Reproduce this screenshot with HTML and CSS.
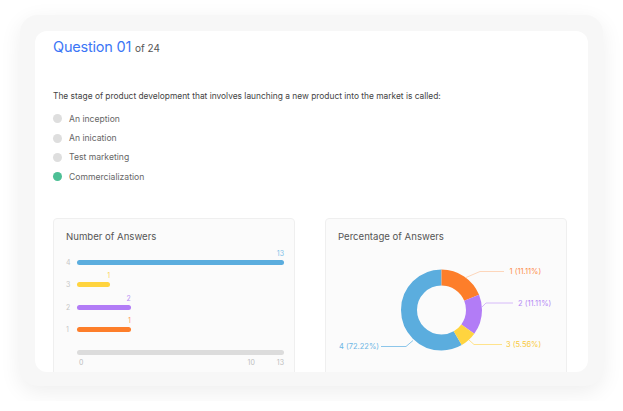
FILE: index.html
```html
<!DOCTYPE html>
<html lang="en">
<head>
  <meta charset="UTF-8" />
  <title>Question 01 of 24</title>
  <link rel="stylesheet" href="styles.css">
</head>
<body>
  <div class="frame">
    <div class="sheet">
      <h1 class="q-title">Question 01 <span class="q-count">of 24</span></h1>

      <p class="q-text">The stage of product development that involves launching a new product into the market is called:</p>

      <ul class="options">
        <li><span class="radio"></span>An inception</li>
        <li><span class="radio"></span>An inication</li>
        <li><span class="radio"></span>Test marketing</li>
        <li><span class="radio checked"></span>Commercialization</li>
      </ul>

      <div class="charts">
        <div class="chart-card">
          <div class="card-title">Number of Answers</div>
          <div class="bars">
            <div class="bar-row">
              <span class="bar-label">4</span>
              <div class="track">
                <div class="bar-wrap" style="width: 100%">
                  <span class="val blue">13</span>
                  <span class="bar bg-blue"></span>
                </div>
              </div>
            </div>
            <div class="bar-row">
              <span class="bar-label">3</span>
              <div class="track">
                <div class="bar-wrap" style="width: 16%">
                  <span class="val yellow">1</span>
                  <span class="bar bg-yellow"></span>
                </div>
              </div>
            </div>
            <div class="bar-row">
              <span class="bar-label">2</span>
              <div class="track">
                <div class="bar-wrap" style="width: 26%">
                  <span class="val purple">2</span>
                  <span class="bar bg-purple"></span>
                </div>
              </div>
            </div>
            <div class="bar-row">
              <span class="bar-label">1</span>
              <div class="track">
                <div class="bar-wrap" style="width: 26%">
                  <span class="val orange">1</span>
                  <span class="bar bg-orange"></span>
                </div>
              </div>
            </div>
            <div class="axis">
              <span class="axis-bar"></span>
              <div class="ticks">
                <span>0</span>
                <span class="ticks-end"><span>10</span><span>13</span></span>
              </div>
            </div>
          </div>
        </div>

        <div class="chart-card">
          <div class="card-title">Percentage of Answers</div>
          <svg class="donut" width="240" height="112" viewBox="0 0 240 112">
            <g transform="rotate(-90 115.5 61)" fill="none" stroke-width="16">
              <circle cx="115.5" cy="61" r="32.5" pathLength="360" stroke="#5badde" stroke-dasharray="210 150" stroke-dashoffset="-150" />
              <circle cx="115.5" cy="61" r="32.5" pathLength="360" stroke="#fd7e2a" stroke-dasharray="68 292" />
              <circle cx="115.5" cy="61" r="32.5" pathLength="360" stroke="#b27cf6" stroke-dasharray="58 302" stroke-dashoffset="-68" />
              <circle cx="115.5" cy="61" r="32.5" pathLength="360" stroke="#ffd43f" stroke-dasharray="24 336" stroke-dashoffset="-126" />
            </g>
            <g fill="none" stroke-width="1">
              <polyline points="140,28.5 154,22.5 178,22.5" stroke="#fdd6bb" />
              <polyline points="156,58 160,54 187,54" stroke="#d6baf9" />
              <polyline points="143,91 148,95.5 176,95.5" stroke="#ffe38c" />
              <polyline points="87,91.5 80,97.5 55,97.5" stroke="#8cc6ea" />
            </g>
            <g class="donut-labels">
              <text x="183.5" y="25" fill="#fd8d49">1 (11.11%)</text>
              <text x="192" y="56.5" fill="#b588f5">2 (11.11%)</text>
              <text x="180" y="98" fill="#f9c93a">3 (5.56%)</text>
              <text x="53" y="100" fill="#6bb5e4" text-anchor="end">4 (72.22%)</text>
            </g>
          </svg>
        </div>
      </div>
    </div>
  </div>
</body>
</html>
```

FILE: styles.css
```css
body {
  margin: 0;
  padding: 15px 20px;
  background: #fff;
  font-family: Inter, "Noto Sans", sans-serif;
  color: #555;
}
.frame {
  background: #f7f7f7;
  border-radius: 18px;
  padding: 16px 15px 14px;
  box-shadow: 0 6px 22px rgba(0, 0, 0, 0.07);
}
.sheet {
  background: #fff;
  border-radius: 12px;
  height: 341px;
  overflow: hidden;
  padding: 0 21px 0 18px;
}
.q-title {
  margin: 0;
  padding-top: 6px;
  font-size: 14.5px;
  line-height: 20px;
  font-weight: 400;
  color: #3b76f6;
  letter-spacing: -0.2px;
}
.q-count {
  font-size: 10px;
  color: #555;
  letter-spacing: 0;
}
.q-text {
  margin: 32px 0 0;
  font-size: 8.4px;
  line-height: 12px;
  color: #444;
}
.options {
  list-style: none;
  margin: 7px 0 0;
  padding: 0;
}
.options li {
  display: flex;
  align-items: center;
  height: 19.4px;
  font-size: 8.6px;
  color: #666;
}
.radio {
  width: 9px;
  height: 9px;
  border-radius: 50%;
  background: #dedede;
  margin-right: 7px;
}
.radio.checked {
  background: #4dbf95;
}
.charts {
  display: flex;
  gap: 30px;
  margin-top: 31px;
}
.chart-card {
  flex: 1;
  height: 170px;
  background: #fbfbfb;
  border: 1px solid #efefef;
  border-radius: 4px;
}
.card-title {
  padding: 11px 13px 0 12px;
  font-size: 9.6px;
  line-height: 14px;
  color: #555;
}
.bars {
  padding: 5px 10px 0 12px;
}
.bar-row {
  display: flex;
  align-items: flex-end;
  height: 16px;
  margin-bottom: 6.6px;
}
.bar-label {
  width: 11px;
  font-size: 7px;
  line-height: 5px;
  color: #c6c6c6;
}
.track {
  flex: 1;
}
.bar-wrap {
  display: flex;
  flex-direction: column;
  align-items: flex-end;
}
.val {
  font-size: 7px;
  line-height: 9px;
  margin-bottom: 2px;
}
.bar {
  display: block;
  width: 100%;
  height: 5px;
  border-radius: 3px;
}
.blue { color: #7cc0e8; }
.yellow { color: #fbd35a; }
.purple { color: #b98cf6; }
.orange { color: #fd9a5c; }
.bg-blue { background: #5badde; }
.bg-yellow { background: #ffd43f; }
.bg-purple { background: #b27cf6; }
.bg-orange { background: #fd7e2a; }
.axis {
  margin-left: 11px;
  padding-top: 11px;
}
.axis-bar {
  display: block;
  height: 5px;
  border-radius: 3px;
  background: #dcdcdc;
}
.ticks {
  display: flex;
  justify-content: space-between;
  padding: 3px 0 0 2px;
  font-size: 7px;
  line-height: 9px;
  color: #bdbdbd;
}
.ticks-end {
  display: flex;
  gap: 22px;
}
.donut {
  display: block;
  margin-top: 5px;
}
.donut-labels {
  font-size: 7.5px;
}
```
